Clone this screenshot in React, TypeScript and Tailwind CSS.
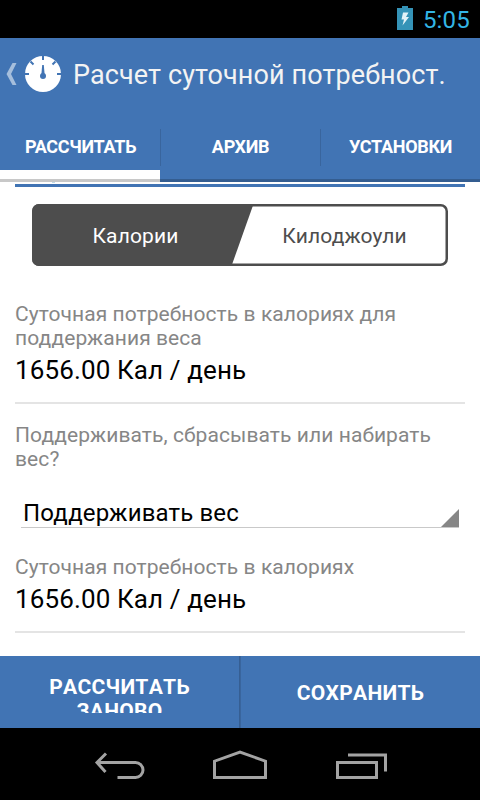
import { useState } from "react";

const TABS = [
  { key: "calc", label: "РАССЧИТАТЬ" },
  { key: "archive", label: "АРХИВ" },
  { key: "settings", label: "УСТАНОВКИ" },
];

function BatteryIcon() {
  return (
    <svg width="16" height="24" viewBox="0 0 16 24" className="mb-[2px]">
      <path d="M5 0h6v2h5v22H0V2h5z" fill="#3593b7" />
      <path d="M6 6.500h5.500L9 11h3L5.500 19.500 7 13.500H4.500z" fill="#e4f3f8" />
    </svg>
  );
}

function GaugeIcon() {
  return (
    <svg width="36" height="36" viewBox="0 0 36 36">
      <circle cx="18" cy="18" r="18" fill="#fff" />
      <g stroke="#4174b4" strokeWidth="2">
        <path d="M18 0v4M0 18h4M36 18h-4M5.500 5.500l3 3M30.500 5.500l-3 3" />
      </g>
      <path d="M17.200 9h1.600l.8 9h-3.200z" fill="#4174b4" />
      <circle cx="18" cy="20" r="3" fill="#4174b4" />
    </svg>
  );
}

function StatusBar() {
  return (
    <div className="flex h-[38px] items-center justify-end bg-black pr-[10px]">
      <BatteryIcon />
      <span className="ml-[10px] pt-[2px] text-[24px] leading-[36px] tracking-[0.2px] text-[#33b5e5]">5:05</span>
    </div>
  );
}

function ActionBar() {
  return (
    <div className="flex h-[72px] items-center bg-[#4174b4]">
      <svg width="11" height="22" viewBox="0 0 11 22" className="ml-[6px]">
        <path d="M6.500 0H10.500L5 11l5.500 11H6.500L0.500 11z" fill="#a5bedc" />
      </svg>
      <div className="ml-[8px]">
        <GaugeIcon />
      </div>
      <h1 className="ml-[12px] pt-[2px] whitespace-nowrap text-[27px] leading-[36px] tracking-[0.1px] text-[#f3f3f3]">
        Расчет суточной потребност.
      </h1>
    </div>
  );
}

function Field({ label, value }: { label: string; value: string }) {
  return (
    <div className="border-b-2 border-[#e4e4e4]">
      <div className="text-[21px] leading-[24px] tracking-[0.07px] text-[#868686]">{label}</div>
      <div className="mt-[3px] h-[49px] text-[26px] leading-[34px] tracking-[0.12px] text-black">{value}</div>
    </div>
  );
}

function UnitToggle() {
  return (
    <div className="relative mx-[17px] mt-[17px] h-[62px]">
      <svg width="416" height="62" viewBox="0 0 416 62" className="absolute inset-0">
        <rect x="1.250" y="1.250" width="413.500" height="59.500" rx="6" fill="#fff" stroke="#4d4d4d" strokeWidth="2.500" />
        <path d="M7 0H221.500L199.500 62H7a7 7 0 0 1-7-7V7a7 7 0 0 1 7-7z" fill="#4d4d4d" />
      </svg>
      <div className="relative grid h-full grid-cols-2 pt-[2px] text-center text-[21px] leading-[60px] tracking-[0.15px]">
        <button className="pr-[1px] text-white">Калории</button>
        <button className="pl-[1px] text-[#4d4d4d]">Килоджоули</button>
      </div>
    </div>
  );
}

function NavBar() {
  return (
    <div className="flex h-[72px] items-center justify-center bg-black">
      <svg width="292" height="32" viewBox="0 0 292 32" fill="none" stroke="#a3a3a3" strokeWidth="3" className="overflow-visible">
        <path d="M3 14.500H41.500a7.500 7.500 0 0 1 0 15H23.500" />
        <path d="M12 5.500L3 14.500l8.500 9.500" />
        <path d="M120.500 29.500V13.200L146 4l25.500 9.200V29.500z" />
        <path d="M243.500 14.500h39v15h-39z" />
        <path d="M254 7h37.500v16.500" />
      </svg>
    </div>
  );
}

export default function App() {
  const [tab, setTab] = useState("calc");

  return (
    <div className="flex h-[800px] w-[480px] flex-col overflow-hidden bg-white font-['Roboto','Noto_Sans',sans-serif]">
      <StatusBar />
      <ActionBar />
      <nav className="grid h-[72px] grid-cols-3 bg-[#4174b4]">
        {TABS.map((t, i) => (
          <button key={t.key} onClick={() => setTab(t.key)} className="flex flex-col text-white">
            <span className="flex h-[60px] w-full items-center pt-[14px]">
              <span className={`mt-[1px] h-[37px] w-px shrink-0 ${i > 0 ? "bg-[#39659d]" : ""}`} />
              <span className="grow text-center text-[18px] leading-[24px] font-bold tracking-[-0.3px]">{t.label}</span>
            </span>
            <span
              className={`h-[12px] w-full border-b-[3px] ${
                tab === t.key ? "border-[#c8c8c8] bg-white" : "border-[#345d90]"
              }`}
            />
          </button>
        ))}
      </nav>
      <main className="flex h-[474px] flex-col px-[15px]">
        <div className="mb-px ml-[37px] h-px w-[3px] bg-[#c3dcea]" />
        <div className="h-[3px] bg-[#4174b4]" />
        <UnitToggle />
        <div className="mt-[36px]">
          <Field label="Суточная потребность в калориях для поддержания веса" value="1656.00 Кал / день" />
        </div>
        <div className="mt-[19px] text-[21px] leading-[24px] tracking-[0.08px] text-[#868686]">
          Поддерживать, сбрасывать или набирать вес?
        </div>
        <div className="mx-[6px] mt-[24px] flex h-[33px] items-end justify-between border-b border-[#c9c9c9]">
          <span className="pl-[2px] text-[24px] leading-[28px] tracking-[0.15px] text-black">Поддерживать вес</span>
          <svg width="18" height="18" viewBox="0 0 18 18">
            <path d="M18 0V18H0z" fill="#868686" />
          </svg>
        </div>
        <div className="mt-[27px]">
          <Field label="Суточная потребность в калориях" value="1656.00 Кал / день" />
        </div>
      </main>
      <div className="grid h-[72px] grid-cols-2 bg-[#4174b4] text-[21px] leading-[24px] font-bold tracking-[0.3px] text-white [font-kerning:none]">
        <button className="flex justify-center border-r border-[#365f93] pt-[19px]">
          <span className="h-[38px] w-[160px] overflow-hidden">РАССЧИТАТЬ ЗАНОВО</span>
        </button>
        <button className="border-l border-[#39659d] pt-[2px]">СОХРАНИТЬ</button>
      </div>
      <NavBar />
    </div>
  );
}
